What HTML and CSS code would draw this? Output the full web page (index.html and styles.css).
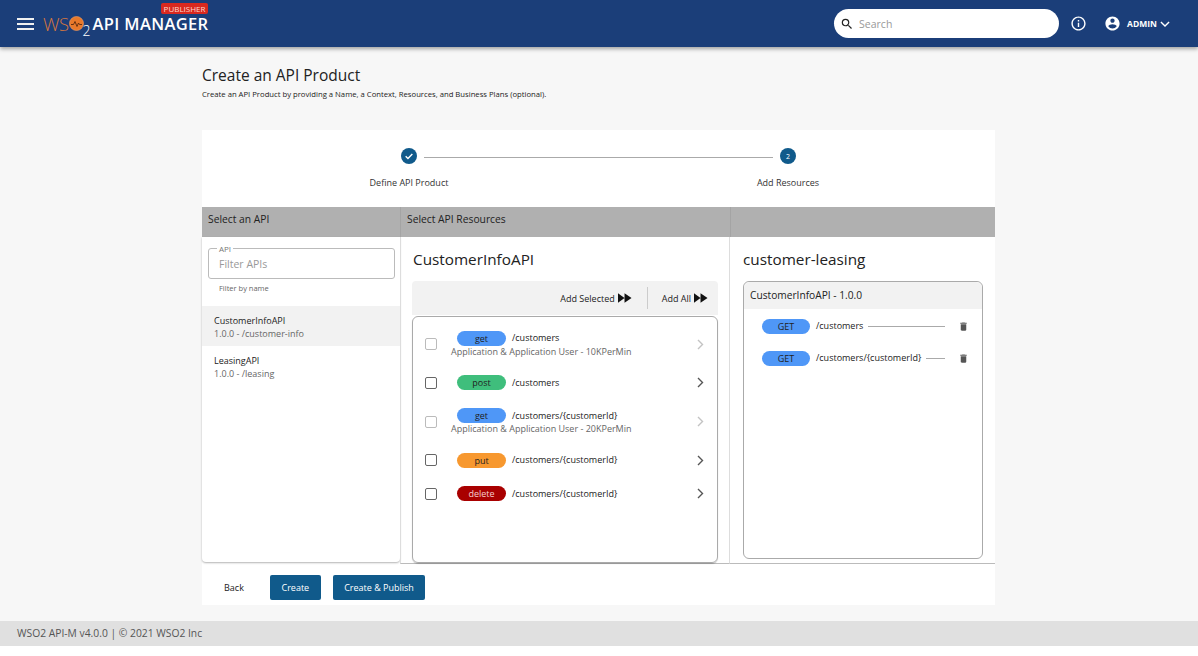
FILE: index.html
```html
<!DOCTYPE html>
<html lang="en">
<head>
  <meta charset="UTF-8" />
  <title>Create an API Product</title>
  <link rel="stylesheet" href="styles.css">
</head>
<body>

<header class="topbar">
  <div class="hamburger"><span></span><span></span><span></span></div>
  <div class="logo">
    <span class="logo-ws">WS</span>
    <svg class="logo-o" width="15" height="15" viewBox="0 0 15 15">
      <circle cx="7.5" cy="7.5" r="7" fill="#e8792b" stroke="#f3a066" stroke-width="0.6"/>
      <path d="M2 8.5h2.5l1.5-3 2 5 1.5-3.5 1 1.5h2.5" fill="none" stroke="#5a2a10" stroke-width="0.9"/>
    </svg>
    <span class="logo-two">2</span>
    <span class="logo-name">API MANAGER</span>
    <span class="logo-badge">PUBLISHER</span>
  </div>
  <div class="search">
    <svg width="14" height="14" viewBox="0 0 24 24"><path fill="#222" d="M15.5 14h-.79l-.28-.27A6.47 6.47 0 0 0 16 9.5 6.5 6.5 0 1 0 9.5 16c1.61 0 3.09-.59 4.23-1.57l.27.28v.79l5 4.99L20.49 19l-4.99-5zm-6 0C7.01 14 5 11.99 5 9.5S7.01 5 9.5 5 14 7.01 14 9.5 11.99 14 9.5 14z"/></svg>
    <span>Search</span>
  </div>
  <svg class="info" width="17" height="17" viewBox="0 0 24 24"><path fill="#fff" d="M11 7h2v2h-2zm0 4h2v6h-2zm1-9C6.48 2 2 6.48 2 12s4.48 10 10 10 10-4.48 10-10S17.52 2 12 2zm0 18c-4.41 0-8-3.59-8-8s3.59-8 8-8 8 3.59 8 8-3.59 8-8 8z"/></svg>
  <div class="user">
    <svg width="17" height="17" viewBox="0 0 24 24"><path fill="#fff" d="M12 2C6.48 2 2 6.48 2 12s4.48 10 10 10 10-4.48 10-10S17.52 2 12 2zm0 3c1.66 0 3 1.34 3 3s-1.34 3-3 3-3-1.34-3-3 1.34-3 3-3zm0 14.2a7.2 7.2 0 0 1-6-3.22c.03-1.99 4-3.08 6-3.08s5.97 1.09 6 3.08a7.2 7.2 0 0 1-6 3.22z"/></svg>
    <span>ADMIN</span>
    <svg class="user-chev" width="14" height="14" viewBox="0 0 24 24"><path fill="none" stroke="#fff" stroke-width="2.4" d="M5 8.5l7 7 7-7"/></svg>
  </div>
</header>

<main class="page">
  <h1>Create an API Product</h1>
  <p class="subtitle">Create an API Product by providing a Name, a Context, Resources, and Business Plans (optional).</p>

  <section class="card">
    <div class="stepper">
      <div class="step-track">
        <span class="step-dot">
          <svg width="10" height="10" viewBox="0 0 24 24"><path fill="none" stroke="#fff" stroke-width="3.4" d="M4 12.5l5.5 5.5L20 7"/></svg>
        </span>
        <span class="step-line"></span>
        <span class="step-dot">2</span>
      </div>
      <div class="step-labels">
        <span>Define API Product</span>
        <span>Add Resources</span>
      </div>
    </div>

    <div class="col-heads">
      <div class="head-api">Select an API</div>
      <div class="head-res">Select API Resources</div>
      <div class="head-prod"></div>
    </div>

    <div class="cols">
      <div class="col-api">
        <fieldset class="filter">
          <legend>API</legend>
          <span>Filter APIs</span>
        </fieldset>
        <p class="helper">Filter by name</p>
        <ul class="api-list">
          <li class="selected"><b>CustomerInfoAPI</b><small>1.0.0 - /customer-info</small></li>
          <li><b>LeasingAPI</b><small>1.0.0 - /leasing</small></li>
        </ul>
      </div>

      <div class="col-res">
        <h2>CustomerInfoAPI</h2>
        <div class="toolbar">
          <span class="tool">Add Selected
            <svg width="14" height="10" viewBox="0 0 15 10"><path fill="#111" d="M0 0l7 5-7 5zM7 0l7.5 5L7 10z"/></svg>
          </span>
          <span class="tool-sep"></span>
          <span class="tool">Add All
            <svg width="14" height="10" viewBox="0 0 15 10"><path fill="#111" d="M0 0l7 5-7 5zM7 0l7.5 5L7 10z"/></svg>
          </span>
        </div>
        <div class="res-list">
          <div class="res-row tall disabled">
            <span class="check"></span>
            <div class="res-main">
              <div class="res-line"><span class="pill get">get</span><span class="path">/customers</span></div>
              <div class="res-sub">Application &amp; Application User - 10KPerMin</div>
            </div>
            <svg class="chev" width="7" height="11" viewBox="0 0 7 11"><path fill="none" stroke="#555" stroke-width="1.4" d="M1 1l4.5 4.5L1 10"/></svg>
          </div>
          <div class="res-row">
            <span class="check"></span>
            <div class="res-main">
              <div class="res-line"><span class="pill post">post</span><span class="path">/customers</span></div>
            </div>
            <svg class="chev" width="7" height="11" viewBox="0 0 7 11"><path fill="none" stroke="#555" stroke-width="1.4" d="M1 1l4.5 4.5L1 10"/></svg>
          </div>
          <div class="res-row tall disabled">
            <span class="check"></span>
            <div class="res-main">
              <div class="res-line"><span class="pill get">get</span><span class="path">/customers/{customerId}</span></div>
              <div class="res-sub">Application &amp; Application User - 20KPerMin</div>
            </div>
            <svg class="chev" width="7" height="11" viewBox="0 0 7 11"><path fill="none" stroke="#555" stroke-width="1.4" d="M1 1l4.5 4.5L1 10"/></svg>
          </div>
          <div class="res-row">
            <span class="check"></span>
            <div class="res-main">
              <div class="res-line"><span class="pill put">put</span><span class="path">/customers/{customerId}</span></div>
            </div>
            <svg class="chev" width="7" height="11" viewBox="0 0 7 11"><path fill="none" stroke="#555" stroke-width="1.4" d="M1 1l4.5 4.5L1 10"/></svg>
          </div>
          <div class="res-row">
            <span class="check"></span>
            <div class="res-main">
              <div class="res-line"><span class="pill delete">delete</span><span class="path">/customers/{customerId}</span></div>
            </div>
            <svg class="chev" width="7" height="11" viewBox="0 0 7 11"><path fill="none" stroke="#555" stroke-width="1.4" d="M1 1l4.5 4.5L1 10"/></svg>
          </div>
        </div>
      </div>

      <div class="col-prod">
        <h2>customer-leasing</h2>
        <div class="prod-box">
          <div class="prod-head">CustomerInfoAPI - 1.0.0</div>
          <div class="prod-rows">
            <div class="prod-row">
              <span class="pill get caps">GET</span><span class="path">/customers</span><span class="prod-line"></span>
              <svg width="11" height="11" viewBox="0 0 24 24"><path fill="#555" d="M6 19c0 1.1.9 2 2 2h8c1.1 0 2-.9 2-2V7H6v12zM19 4h-3.5l-1-1h-5l-1 1H5v2h14V4z"/></svg>
            </div>
            <div class="prod-row">
              <span class="pill get caps">GET</span><span class="path">/customers/{customerId}</span><span class="prod-line"></span>
              <svg width="11" height="11" viewBox="0 0 24 24"><path fill="#555" d="M6 19c0 1.1.9 2 2 2h8c1.1 0 2-.9 2-2V7H6v12zM19 4h-3.5l-1-1h-5l-1 1H5v2h14V4z"/></svg>
            </div>
          </div>
        </div>
      </div>
    </div>

    <div class="actions">
      <span class="btn-back">Back</span>
      <button>Create</button>
      <button>Create &amp; Publish</button>
    </div>
  </section>
</main>

<footer class="footer">WSO2 API-M v4.0.0 | © 2021 WSO2 Inc</footer>

</body>
</html>
```

FILE: styles.css
```css
* {
  box-sizing: border-box;
}

html, body {
  height: 656px;
  overflow: hidden;
}

body {
  margin: 0;
  background: #fff;
  color: #222;
  font-family: 'Open Sans', sans-serif;
}

/* top bar */
.topbar {
  height: 47px;
  background: #1b3e79;
  box-shadow: 0 2px 4px rgba(0, 0, 0, 0.35);
  display: flex;
  align-items: center;
  padding-left: 17px;
  color: #fff;
  position: relative;
}

.hamburger {
  width: 17px;
  display: flex;
  flex-direction: column;
  gap: 3px;
  margin-right: 9px;
}

.hamburger span {
  height: 2px;
  background: #f0f0f0;
}

.logo {
  display: flex;
  align-items: center;
  position: relative;
  height: 47px;
}

.logo-ws {
  font-size: 18.5px;
  font-weight: 300;
  color: #d9773d;
  letter-spacing: -0.5px;
}

.logo-two {
  font-size: 14px;
  font-weight: 300;
  line-height: 14px;
  margin-top: 15px;
  margin-left: -1px;
  margin-right: 2px;
}

.logo-name {
  font-size: 16.5px;
  font-weight: 600;
  letter-spacing: 0.35px;
}

.logo-badge {
  position: absolute;
  top: 3px;
  right: 0;
  background: #d9291f;
  color: #ffd9d0;
  font-size: 8px;
  line-height: 11px;
  padding: 0 3px;
  border-radius: 2px;
}

.search {
  margin-left: auto;
  width: 225px;
  height: 29px;
  background: #fff;
  border-radius: 15px;
  display: flex;
  align-items: center;
  gap: 5px;
  padding-left: 6px;
  color: #999;
  font-size: 10.5px;
}

.info {
  margin-left: 11px;
}

.user {
  display: flex;
  align-items: center;
  margin-left: 17px;
  margin-right: 26px;
  font-size: 8.5px;
  font-weight: 700;
  gap: 6px;
}

.user-chev {
  margin-left: -5px;
}

/* page */
.page {
  height: 574px;
  background: #f7f7f7;
  padding: 19px 203px 0 202px;
}

h1 {
  margin: 0;
  font-size: 15.5px;
  font-weight: 400;
  line-height: 18px;
  color: #222;
}

.subtitle {
  margin: 5px 0 0;
  font-size: 7.7px;
  line-height: 11px;
  color: #222;
}

.card {
  margin-top: 30px;
  height: 475px;
  background: #fff;
  display: flex;
  flex-direction: column;
}

/* stepper */
.stepper {
  height: 77px;
  padding-top: 18px;
}

.step-track {
  display: flex;
  align-items: center;
  padding-left: 199px;
}

.step-dot {
  width: 16px;
  height: 16px;
  border-radius: 50%;
  background: #105a8b;
  color: #fff;
  font-size: 7px;
  display: flex;
  align-items: center;
  justify-content: center;
}

.step-line {
  width: 349px;
  margin: 3px 7px 0;
  border-top: 1px solid #aaa;
}

.step-labels {
  display: grid;
  grid-template-columns: 379px 379px;
  padding-left: 17.5px;
  margin-top: 12px;
  text-align: center;
  font-size: 9px;
  line-height: 14px;
  color: #333;
}

/* column heads */
.col-heads {
  height: 30px;
  background: #b0b0b0;
  display: flex;
  font-size: 10.3px;
  line-height: 25px;
  color: #222;
}

.head-api {
  width: 199px;
  padding-left: 6px;
  border-right: 1px solid #a4a4a4;
}

.head-res {
  width: 330px;
  padding-left: 6px;
  border-right: 1px solid #a4a4a4;
}

.cols {
  height: 327px;
  display: flex;
}

/* left column */
.col-api {
  width: 198px;
  height: 325px;
  border-radius: 0 0 4px 4px;
  box-shadow: 0 1px 2px rgba(0, 0, 0, 0.3);
}

.filter {
  margin: 6px 5px 0 6px;
  padding: 0 0 0 10px;
  height: 36px;
  border: 1px solid #bbb;
  border-radius: 3px;
  font-size: 10.5px;
  color: #999;
}

.filter legend {
  padding: 0 2px;
  margin-left: -2px;
  font-size: 8px;
  line-height: 11px;
  color: #777;
}

.filter span {
  display: block;
  line-height: 21px;
}

.helper {
  margin: 3px 0 0 17px;
  font-size: 7.5px;
  line-height: 12px;
  color: #666;
}

.api-list {
  list-style: none;
  margin: 12px 0 0;
  padding: 0;
}

.api-list li {
  height: 40px;
  padding: 8px 0 0 12px;
  font-size: 9px;
  line-height: 13px;
}

.api-list li.selected {
  background: #f2f2f2;
}

.api-list b {
  display: block;
  font-weight: 400;
  color: #222;
}

.api-list small {
  display: block;
  font-size: 9px;
  color: #666;
}

/* middle column */
.col-res {
  width: 330px;
  padding: 12px 11px 0;
  border-left: 1px solid #ddd;
  border-right: 1px solid #ddd;
  border-bottom: 1px solid #bbb;
}

h2 {
  margin: 0 0 0 1px;
  font-size: 15.3px;
  font-weight: 400;
  line-height: 20px;
  color: #222;
}

.toolbar {
  margin-top: 12px;
  height: 34px;
  background: #f2f2f2;
  border-radius: 4px 4px 0 0;
  display: flex;
  align-items: center;
  justify-content: flex-end;
  padding-right: 10px;
  font-size: 9px;
}

.tool {
  display: flex;
  align-items: center;
  gap: 3px;
}

.tool-sep {
  height: 22px;
  border-left: 1px solid #ccc;
  margin: 0 14px 0 15px;
}

.res-list {
  height: 247px;
  margin-top: 1px;
  padding-top: 5px;
  border: 1px solid #aaa;
  border-radius: 6px;
  box-shadow: 0 1px 1px rgba(0, 0, 0, 0.2);
}

.res-row {
  height: 33.5px;
  display: flex;
  align-items: center;
  padding: 0 13px 0 12px;
}

.res-row.tall {
  height: 44px;
}

.check {
  width: 12px;
  height: 12px;
  border: 1.5px solid #666;
  border-radius: 2px;
  flex-shrink: 0;
}

.res-row.disabled .check {
  border-color: #bbb;
}

.res-row.disabled .chev {
  opacity: 0.35;
}

.res-main {
  flex: 1;
  margin-left: 14px;
}

.res-line {
  display: flex;
  align-items: center;
  margin-left: 6px;
}

.res-sub {
  font-size: 9px;
  line-height: 12px;
  color: #666;
}

.pill {
  width: 49px;
  height: 15px;
  border-radius: 8px;
  text-align: center;
  font-size: 9px;
  line-height: 15px;
  color: #222;
  flex-shrink: 0;
}

.pill.get { background: #4f97f7; }
.pill.post { background: #3fbe7c; }
.pill.put { background: #f7982f; }
.pill.delete { background: #a90000; color: #f6cfcf; }

.path {
  margin-left: 6px;
  font-size: 9px;
  line-height: 14px;
  color: #222;
  white-space: nowrap;
}

/* right column */
.col-prod {
  width: 265px;
  padding: 12px 12px 0 13px;
  border-bottom: 1px solid #bbb;
}

.col-prod h2 {
  margin-left: 0;
}

.prod-box {
  margin-top: 12px;
  height: 278px;
  border: 1px solid #aaa;
  border-radius: 6px;
}

.prod-head {
  height: 27px;
  padding-left: 6px;
  background: #f2f2f2;
  border-radius: 6px 6px 0 0;
  font-size: 10.2px;
  line-height: 27px;
  color: #222;
}

.prod-rows {
  padding-top: 1px;
}

.prod-row {
  height: 32px;
  display: flex;
  align-items: center;
  padding: 0 13px 0 18px;
}

.pill.caps {
  width: 48px;
}

.prod-line {
  flex: 1;
  margin: 0 13px 0 5px;
  border-top: 1px solid #aaa;
}

/* bottom buttons */
.actions {
  flex: 1;
  display: flex;
  align-items: center;
  padding: 5px 0 0 22px;
  font-size: 9px;
}

.btn-back {
  width: 46px;
  color: #222;
}

button {
  height: 25px;
  padding: 0 11.5px;
  margin-right: 12px;
  background: #105a8b;
  color: #fff;
  border: none;
  border-radius: 2px;
  font-family: inherit;
  font-size: 9px;
}

/* footer */
.footer {
  height: 25px;
  padding-left: 17px;
  background: #e0e0e0;
  color: #555;
  font-size: 10.3px;
  line-height: 24px;
}
```
